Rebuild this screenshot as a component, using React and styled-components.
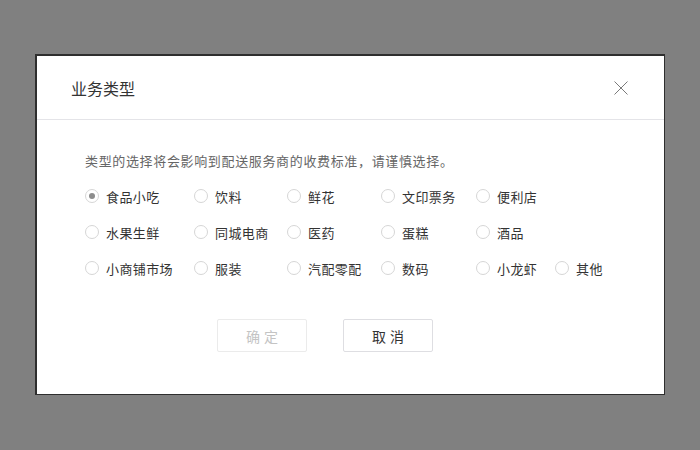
import React, { useState } from 'react'
import styled, { createGlobalStyle } from 'styled-components'

const GlobalStyle = createGlobalStyle`
  html, body {
    margin: 0;
    padding: 0;
    background: #808080;
  }
  body {
    font-family: "Microsoft YaHei", "Noto Sans CJK SC", "Noto Sans", sans-serif;
  }
`

const Overlay = styled.div`
  width: 700px;
  height: 450px;
  box-sizing: border-box;
  padding: 54px 0 0 35px;
  background: #808080;
`
const Dialog = styled.div`
  width: 630px;
  height: 341px;
  box-sizing: border-box;
  background: #fff;
  border-top: 2px solid #2e2e2e;
  border-left: 2px solid #2e2e2e;
  border-right: 1px solid #2e2e2e;
  border-bottom: 1px solid #2e2e2e;
  display: flex;
  flex-direction: column;
`
const Header = styled.div`
  height: 64px;
  box-sizing: border-box;
  padding: 0 36px 0 34px;
  display: flex;
  align-items: center;
  justify-content: space-between;
  border-bottom: 1px solid #e4e4e8;
`
const Title = styled.h2`
  margin: 0;
  font-size: 16px;
  font-weight: normal;
  color: #333;
`
const CloseButton = styled.button`
  border: 0;
  padding: 0;
  background: none;
  width: 14px;
  height: 14px;
  display: flex;
  cursor: pointer;
`
const Body = styled.div`
  padding: 31px 0 0 48px;
`
const Notice = styled.p`
  margin: 0;
  font-size: 13px;
  line-height: 20px;
  letter-spacing: 0.65px;
  color: #666;
`
const OptionGrid = styled.div`
  margin-top: 15px;
  display: grid;
  grid-template-columns: 109px 93px 94px 95px 79px auto;
  row-gap: 16px;
`
const Option = styled.label`
  display: flex;
  align-items: center;
  height: 20px;
  font-size: 13px;
  letter-spacing: 0.4px;
  color: #333;
  cursor: pointer;
  white-space: nowrap;
`
const RadioDot = styled.span`
  width: 14px;
  height: 14px;
  box-sizing: border-box;
  border-radius: 50%;
  border: 1px solid #d6d6d6;
  margin-right: 7px;
  display: flex;
  align-items: center;
  justify-content: center;
  flex-shrink: 0;
  &::after {
    content: '';
    width: 6px;
    height: 6px;
    border-radius: 50%;
    background: ${(p) => (p.$checked ? '#8c8c8c' : 'transparent')};
  }
`
const Footer = styled.div`
  margin-top: 41px;
  padding-left: 132px;
  display: flex;
  gap: 36px;
`
const Button = styled.button`
  width: 90px;
  height: 33px;
  box-sizing: border-box;
  padding: 0 0 0 4px;
  border-radius: 2px;
  background: #fff;
  font-family: inherit;
  font-size: 14px;
  letter-spacing: 4px;
  border: 1px solid ${(p) => (p.disabled ? '#ebebeb' : '#dedee2')};
  color: ${(p) => (p.disabled ? '#c4c4c4' : '#333')};
  cursor: ${(p) => (p.disabled ? 'default' : 'pointer')};
`

const rows = [
  ['食品小吃', '饮料', '鲜花', '文印票务', '便利店'],
  ['水果生鲜', '同城电商', '医药', '蛋糕', '酒品'],
  ['小商铺市场', '服装', '汽配零配', '数码', '小龙虾', '其他'],
]

function App() {
  const [selected, setSelected] = useState('食品小吃')

  return (
    <Overlay>
      <GlobalStyle />
      <Dialog>
        <Header>
          <Title>业务类型</Title>
          <CloseButton aria-label="关闭">
            <svg width="14" height="14" viewBox="0 0 14 14">
              <path d="M0.5 0.5 L13.5 13.5 M13.5 0.5 L0.5 13.5" stroke="#7a7a7a" strokeWidth="1" fill="none" />
            </svg>
          </CloseButton>
        </Header>
        <Body>
          <Notice>类型的选择将会影响到配送服务商的收费标准，请谨慎选择。</Notice>
          <OptionGrid>
            {rows.map((row, i) =>
              [0, 1, 2, 3, 4, 5].map((j) =>
                row[j] ? (
                  <Option key={row[j]} onClick={() => setSelected(row[j])}>
                    <RadioDot $checked={selected === row[j]} />
                    {row[j]}
                  </Option>
                ) : (
                  <span key={i + '-' + j} />
                )
              )
            )}
          </OptionGrid>
          <Footer>
            <Button disabled>确定</Button>
            <Button>取消</Button>
          </Footer>
        </Body>
      </Dialog>
    </Overlay>
  )
}

export default App
